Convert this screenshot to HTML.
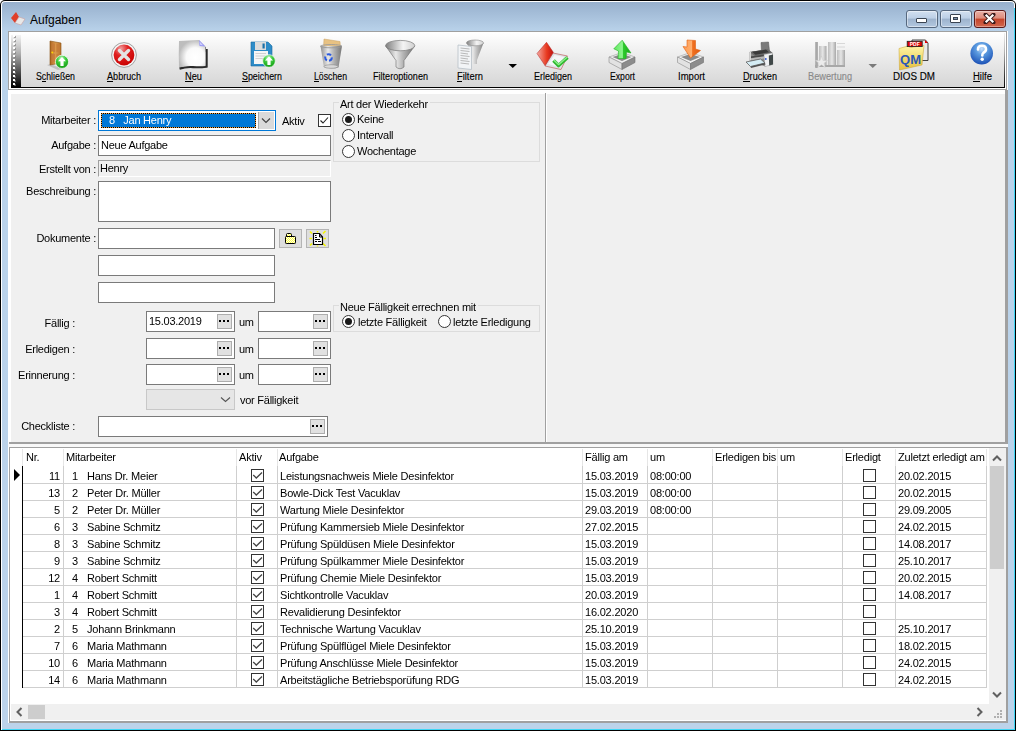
<!DOCTYPE html>
<html><head><meta charset="utf-8">
<style>
*{box-sizing:border-box;margin:0;padding:0}
html,body{width:1016px;height:731px;overflow:hidden;background:#fff}
body{position:relative;font-family:"Liberation Sans",sans-serif;font-size:11px;color:#000}
.a{position:absolute}
.lbl{position:absolute;white-space:pre;font-size:11px;letter-spacing:-0.25px;line-height:13px}
.box{position:absolute;background:#fff;border:1px solid #7a7a7a}
.dots{position:absolute;background:#e1e1e1;border:1px solid #adadad;width:15px;height:15px}
.dots:after{content:"";position:absolute;left:1px;top:5px;width:2px;height:2px;background:#000;box-shadow:4px 0 0 #000,8px 0 0 #000}
.tbl{position:absolute;white-space:pre;font-size:10px;letter-spacing:-0.2px;line-height:12px;top:71px;text-align:center;color:#1e1e1e}
.tbl u{text-decoration:none;border-bottom:1px solid #000}
.radio{position:absolute;width:13px;height:13px;border-radius:50%;border:1px solid #333;background:#fff}
.radio.on:after{content:"";position:absolute;left:2px;top:2px;width:7px;height:7px;border-radius:50%;background:#1a1a1a}
.gt{position:absolute;white-space:pre;font-size:11px;letter-spacing:-0.2px;line-height:13px}
.grp{position:absolute;border:1px solid #dcdcdc}
</style></head><body>
<!-- window frame -->
<div class="a" style="left:0;top:0;width:1016px;height:731px;background:#000;border-radius:5px 5px 0 0"></div>
<div class="a" style="left:1px;top:1px;width:1014px;height:729px;background:#fff;border-radius:4px 4px 0 0"></div>
<div class="a" style="left:2px;top:2px;width:1012px;height:727px;border-radius:3px 3px 0 0;background:linear-gradient(#97b0cd 0px,#b9d2ea 29px,#bcd3ea 100%)"></div>
<div class="a" style="left:1014px;top:8px;width:1px;height:722px;background:#3fd6f5"></div>
<div class="a" style="left:2px;top:729px;width:1013px;height:1px;background:#3fd6f5"></div>

<!-- title -->
<svg class="a" style="left:10px;top:11px" width="16" height="16" viewBox="0 0 16 16">
  <path d="M1 7 L6 1 L9 6 L5 12 Z" fill="#e0402a"/>
  <path d="M5 12 L9 6 L15 8 L11 14 Z" fill="#e8e8e8" stroke="#c9a0a0" stroke-width="0.6"/>
</svg>
<div class="a" style="left:30px;top:13px;font-size:12px;line-height:14px;color:#000;white-space:pre">Aufgaben</div>

<!-- caption buttons -->
<div class="a" style="left:906px;top:10px;width:32px;height:18px;border:1px solid #56687f;border-radius:3px;background:linear-gradient(#d2e0f0 0,#bccfe6 45%,#9db3cd 50%,#b3c8e0 100%);box-shadow:inset 0 0 0 1px rgba(255,255,255,.45)"></div>
<div class="a" style="left:916px;top:18px;width:11px;height:5px;background:#fff;border:1px solid #3a4452;border-radius:1px"></div>
<div class="a" style="left:940px;top:10px;width:32px;height:18px;border:1px solid #56687f;border-radius:3px;background:linear-gradient(#d2e0f0 0,#bccfe6 45%,#9db3cd 50%,#b3c8e0 100%);box-shadow:inset 0 0 0 1px rgba(255,255,255,.45)"></div>
<div class="a" style="left:950px;top:14px;width:11px;height:9px;background:#fff;border:1px solid #3a4452;border-radius:1px"><div class="a" style="left:2px;top:2px;width:5px;height:3px;background:#7d93ad;border:1px solid #3a4452"></div></div>
<div class="a" style="left:974px;top:10px;width:32px;height:18px;border:1px solid #5a1a1a;border-radius:3px;background:linear-gradient(#eab0a6 0,#dd8b7b 45%,#c4442a 50%,#d2684e 100%);box-shadow:inset 0 0 0 1px rgba(255,255,255,.35)"></div>
<svg class="a" style="left:983px;top:13px" width="13" height="11" viewBox="0 0 13 11">
  <path d="M2.5 1.5 L10.5 9.5 M10.5 1.5 L2.5 9.5" stroke="#3a1a1a" stroke-width="4" fill="none" stroke-linecap="round"/>
  <path d="M2.7 1.7 L10.3 9.3 M10.3 1.7 L2.7 9.3" stroke="#fff" stroke-width="2.2" fill="none"/>
</svg>

<!-- client -->
<div class="a" style="left:8px;top:31px;width:1000px;height:692px;background:#fff"></div>

<!-- toolbar -->
<div class="a" style="left:8px;top:31px;width:999px;height:59px;border:1px solid #a0a0a0;background:#fff"></div>
<div class="a" style="left:11px;top:33px;width:994px;height:55px;border-bottom:1px solid #000;background:linear-gradient(#ffffff 0,#f5f5f5 22%,#e6e6e6 58%,#d6d6d6 100%)"></div>
<div class="a" style="left:11px;top:35px;width:10px;height:52px;background:linear-gradient(#f4f4f4,#b0b0b0 35%,#505050 70%,#000 100%)"></div>
<div class="a" style="left:1004px;top:33px;width:1px;height:55px;background:linear-gradient(#f0f0f0,#b0b0b0 35%,#404040 75%,#000)"></div>
<div id="grip" class="a" style="left:13px;top:36px;width:2px;height:2px"></div>

<div id="toolbar" style="position:absolute;left:0;top:0;width:1016px;height:731px"><svg class="a" style="left:0;top:0" width="1016" height="90" viewBox="0 0 1016 90">
<defs>
<linearGradient id="door" x1="0" x2="1"><stop offset="0" stop-color="#a8621e"/><stop offset="0.45" stop-color="#dc9a4c"/><stop offset="1" stop-color="#b8742c"/></linearGradient>
<radialGradient id="grn" cx="0.45" cy="0.25" r="0.75"><stop offset="0" stop-color="#b8f5b8"/><stop offset="0.45" stop-color="#3ccc3c"/><stop offset="1" stop-color="#119a11"/></radialGradient>
<radialGradient id="red" cx="0.35" cy="0.2" r="0.85"><stop offset="0" stop-color="#f0a0a0"/><stop offset="0.4" stop-color="#e02020"/><stop offset="1" stop-color="#c80000"/></radialGradient>
<radialGradient id="page" cx="0.62" cy="0.62" r="0.62"><stop offset="0" stop-color="#ffffff"/><stop offset="0.55" stop-color="#fafafa"/><stop offset="1" stop-color="#bdbdbd"/></radialGradient>
<linearGradient id="silv" x1="0" x2="1"><stop offset="0" stop-color="#8c8c8c"/><stop offset="0.35" stop-color="#e8e8e8"/><stop offset="0.6" stop-color="#b4b4b4"/><stop offset="1" stop-color="#707070"/></linearGradient>
<linearGradient id="silv2" x1="0" x2="1"><stop offset="0" stop-color="#808080"/><stop offset="0.6" stop-color="#f4f4f4"/><stop offset="1" stop-color="#d0d0d0"/></linearGradient>
<linearGradient id="redb" x1="0" x2="1"><stop offset="0" stop-color="#f4a8a0"/><stop offset="0.6" stop-color="#e83a20"/><stop offset="1" stop-color="#c01010"/></linearGradient>
<linearGradient id="garr" x1="0" x2="1"><stop offset="0" stop-color="#5ee85e"/><stop offset="0.5" stop-color="#8ff58f"/><stop offset="0.55" stop-color="#2ecb2e"/><stop offset="1" stop-color="#16a816"/></linearGradient>
<linearGradient id="oarr" x1="0" x2="1"><stop offset="0" stop-color="#ff9a50"/><stop offset="0.5" stop-color="#ffb070"/><stop offset="0.55" stop-color="#f07020"/><stop offset="1" stop-color="#e05a10"/></linearGradient>
<radialGradient id="blue" cx="0.5" cy="0.3" r="0.75"><stop offset="0" stop-color="#c8e0fa"/><stop offset="0.35" stop-color="#5b9be0"/><stop offset="1" stop-color="#1448b0"/></radialGradient>
<linearGradient id="fold" x1="0" x2="0" y1="0" y2="1"><stop offset="0" stop-color="#fff6a8"/><stop offset="1" stop-color="#e6c040"/></linearGradient>
<linearGradient id="gbar" x1="0" x2="1"><stop offset="0" stop-color="#bdbdbd"/><stop offset="0.5" stop-color="#e6e6e6"/><stop offset="1" stop-color="#a8a8a8"/></linearGradient>
</defs>
<path d="M47 65 L58 70 L62 69 L51 64 Z" fill="#a8a8a8" opacity="0.6"/>
<path d="M50 41 L61 43 L61 63 L50 65 Z" fill="url(#door)" stroke="#8a5010" stroke-width="0.6"/>
<path d="M51.5 43 L55 43.5 L55 52 L51.5 52 Z M56.5 44 L59.5 44.5 L59.5 52 L56.5 52 Z M51.5 54 L55 54 L55 62 L51.5 62.5 Z M56.5 54 L59.5 54 L59.5 61.5 L56.5 62 Z" fill="#c57a38" opacity="0.8"/>
<circle cx="52.3" cy="52.5" r="1" fill="#ffd400"/>
<circle cx="62" cy="61.8" r="6.6" fill="url(#grn)" stroke="#ffffff" stroke-width="0.7"/>
<path d="M62 57 L66 61.2 L63.6 61.2 L63.6 66 L60.4 66 L60.4 61.2 L58 61.2 Z" fill="#fff"/>
<circle cx="124" cy="55" r="12.4" fill="#f4f4f4" stroke="#a0a0a0" stroke-width="1"/>
<circle cx="124" cy="55" r="10.4" fill="url(#red)"/>
<path d="M119.5 50.5 L128.5 59.5 M128.5 50.5 L119.5 59.5" stroke="#e4e4e4" stroke-width="3.4" stroke-linecap="round"/>
<filter id="blur1" x="-20%" y="-20%" width="140%" height="140%"><feGaussianBlur stdDeviation="0.7"/></filter>
<path d="M179.5 68.5 Q186 66.5 193 67 Q200 67.5 206.5 66.5 L206.5 49" stroke="#2a2a2a" stroke-width="2.4" fill="none" filter="url(#blur1)"/>
<path d="M199 46 L206 47 L206 52 L201 50 Z" fill="#333" filter="url(#blur1)"/>
<path d="M179 41 Q185 40.5 189 40.5 Q194 40 199 40 L205.5 46.5 L205.5 66 Q200 66.5 193 66 Q186 65.5 179 67.5 Q178.5 54 179 41 Z" fill="url(#page)"/>
<path d="M199 40 L205.5 46.5 L199.5 46 Z" fill="#9a9af4"/>
<path d="M199.5 41.5 L203 45.3 L200.3 45.1 Z" fill="#d0d0ff"/>
<path d="M251 42 L268 42 L272 46 L272 66 L251 66 Z" fill="#2e8cc8" stroke="#1a6aa0" stroke-width="0.6"/>
<rect x="255" y="42" width="11" height="8" fill="#dcdcdc"/><rect x="262.5" y="43.5" width="2.2" height="5" fill="#1a70a8"/>
<rect x="254" y="51" width="14" height="13" fill="#f6f6f6"/><path d="M255.5 53.5 L266 53.5 M255.5 56 L266 56 M255.5 58.5 L266 58.5" stroke="#c8c8c8" stroke-width="0.8"/>
<circle cx="269" cy="61" r="6.3" fill="url(#grn)" stroke="#fff" stroke-width="0.7"/>
<path d="M269 56.3 L273 60.5 L270.6 60.5 L270.6 65 L267.4 65 L267.4 60.5 L265 60.5 Z" fill="#fff"/>
<path d="M324 39 L340 41.5 L340.5 48 L323.5 48 Z" fill="#e8c283" stroke="#c8a060" stroke-width="0.5"/>
<path d="M320.5 46 L342 46 L338.5 67.5 Q331 70 324 67.5 Z" fill="url(#silv)" opacity="0.95"/>
<ellipse cx="331.2" cy="46.2" rx="10.8" ry="1.6" fill="none" stroke="#9a9a9a" stroke-width="0.9"/>
<ellipse cx="331" cy="66.5" rx="7" ry="1.8" fill="#d8d8d8" stroke="#8a8a8a" stroke-width="0.6"/>
<circle cx="328.5" cy="57.5" r="3.3" fill="none" stroke="#2a5ae0" stroke-width="2" stroke-dasharray="4.5 2.2"/>
<path d="M385.7 46 L396 60.5 L396 67 Q400 70.5 404 67 L404 60.5 L414.7 46 Z" fill="url(#silv)" stroke="#6a6a6a" stroke-width="0.6"/>
<ellipse cx="400.2" cy="45.6" rx="14.6" ry="5.2" fill="url(#silv2)" stroke="#7a7a7a" stroke-width="0.7"/>
<path d="M467 42.9 L473 60 L473 64 L477 64 L477 60 L483.5 42.9 Z" fill="url(#silv)" opacity="0.85"/>
<ellipse cx="475" cy="42.9" rx="8.6" ry="2.9" fill="url(#silv2)" stroke="#8a8a8a" stroke-width="0.6"/>
<path d="M458 45 L471.5 46.5 L471.5 69.5 L458 68 Z" fill="#f2f4f6" stroke="#b8c0c8" stroke-width="0.8"/>
<path d="M460.5 48 L469.5 49 M460.5 50.5 L469.5 51.5 M460.5 53 L468 54 M460.5 55.5 L469.5 56.5 M460.5 58 L468 59 M460.5 60.5 L469.5 61.5 M460.5 63 L469 64" stroke="#a8a8a8" stroke-width="0.8"/>
<path d="M545 66 L553 53 L567.5 56 L561 69.5 Z" fill="#dfe2e6" stroke="#c06060" stroke-width="0.7"/>
<path d="M548 64 L554.5 55 L564 57 L559 67 Z" fill="#f4f6f8"/>
<path d="M537 53.5 L546.5 42.3 L553.3 52.3 L545 65.5 Z" fill="url(#redb)" stroke="#b02020" stroke-width="0.5"/>
<path d="M553.5 60.5 L558.5 65.5 L567.5 57.5" stroke="#2eb82e" stroke-width="3.6" fill="none" stroke-linejoin="round"/>
<path d="M554 60.3 L558.5 64.6 L567 57.3" stroke="#8af08a" stroke-width="1.4" fill="none" stroke-linejoin="round"/>
<path d="M609 57 L622 52.5 L635 57 L622 63.5 Z" fill="#f0f0f0" stroke="#9a9a9a" stroke-width="0.6"/>
<path d="M612.5 57 L622 54 L631.5 57 L622 61 Z" fill="#8a8a8a"/>
<path d="M609 57 L622 63.5 L622 69.5 L609 62.5 Z" fill="#e2e2e2" stroke="#8a8a8a" stroke-width="0.6"/>
<path d="M635 57 L622 63.5 L622 69.5 L635 62.5 Z" fill="#8c8c8c" stroke="#707070" stroke-width="0.6"/>
<path d="M622.2 40.2 L631 53 L626.5 52 L626 58.5 L618 58.5 L618.5 51 L613.8 48.8 Z" fill="url(#garr)" stroke="#20b020" stroke-width="0.6"/>
<path d="M677.5 57 L690.5 52.5 L703.5 57 L690.5 63.5 Z" fill="#f0f0f0" stroke="#9a9a9a" stroke-width="0.6"/>
<path d="M681.0 57 L690.5 54 L700.0 57 L690.5 61 Z" fill="#8a8a8a"/>
<path d="M677.5 57 L690.5 63.5 L690.5 69.5 L677.5 62.5 Z" fill="#e2e2e2" stroke="#8a8a8a" stroke-width="0.6"/>
<path d="M703.5 57 L690.5 63.5 L690.5 69.5 L703.5 62.5 Z" fill="#8c8c8c" stroke="#707070" stroke-width="0.6"/>
<path d="M687 40 L695.5 40.5 L695.5 49 L700.5 50.5 L690.5 58 L683 46.5 L687 47 Z" fill="url(#oarr)" stroke="#e06010" stroke-width="0.6"/>
<path d="M761 42.5 L768.5 42 L769.5 51 L761.5 51.5 Z" fill="#7a7a7a" stroke="#555" stroke-width="0.5"/>
<path d="M749.5 52 L768 49 L772.5 53 L772.5 64.5 L765 66.5 L749.5 60.5 Z" fill="#8a8a8a"/>
<path d="M749.5 52 L768 49 L772.5 53 L755 56 Z" fill="#6a6a6a"/>
<path d="M752 51.8 L766 49.6 L769 52.3 L755.5 54.7 Z" fill="#3a3a3a"/>
<path d="M750 56.5 L764 54.5 L764 56.3 L750 58.3 Z" fill="#4a4a4a"/>
<path d="M750 58.5 L764 56.5 L764 58.5 L750 60.5 Z" fill="#b8b8b8"/>
<path d="M749.5 52 L751 52 L751 60.5 L749.5 60 Z" fill="#d8d8d8"/>
<path d="M764 54.5 L772.5 53 L773 64.5 L765 66.5 Z" fill="#f0f2f4" stroke="#9a9a9a" stroke-width="0.4"/>
<path d="M768.8 55.5 L773 54.5 L773 64.5 L769.2 65.5 Z" fill="#404848"/>
<path d="M746 62 L760.5 59 L765 63 L750.5 66.5 Z" fill="#d4ecf4" stroke="#606060" stroke-width="0.8"/>
<path d="M750.5 66.5 L765 63 L765.5 64.5 L751 68 Z" fill="#505050"/>
<circle cx="765.8" cy="59" r="0.9" fill="#3050d0"/>
<rect x="815.2" y="42" width="2.7" height="26" fill="#a8a8a8"/>
<rect x="819" y="46" width="7.5" height="20" fill="url(#gbar)"/>
<rect x="828" y="42" width="8" height="23.5" fill="url(#gbar)"/>
<rect x="837" y="50" width="8" height="15.5" fill="url(#gbar)"/>
<rect x="815" y="65" width="30" height="2" fill="#a8a8a8"/>
<path d="M837 43.5 L845 43.5 M837 47 L845 47" stroke="#d0d0d0" stroke-width="0.8"/>
<path d="M821.5 56 L823 60.5 L827.5 60.5 L824 63.2 L825.3 67.5 L821.5 64.8 L817.7 67.5 L819 63.2 L815.5 60.5 L820 60.5 Z" fill="#ececec" stroke="#c8c8c8" stroke-width="0.5"/>
<path d="M912 40 L925.5 40 L928 43 L928 60.5 L912 60.5 Z" fill="#e8e8e8" stroke="#303030" stroke-width="0.9"/>
<path d="M925 40 L928 43 L925 43 Z" fill="#e00000"/>
<path d="M917 50 L919 44 L921 50 M916 54 L921.5 49.5 M918 49 L923 53" stroke="#e04040" stroke-width="0.6" fill="none"/>
<path d="M899 48.5 L908 46 L910 47.5 L924 45.5 L922 65 L899.5 70 Z" fill="url(#fold)" stroke="#c8a030" stroke-width="0.5"/>
<rect x="907.2" y="41.3" width="15" height="5.3" fill="#e00000" stroke="#202020" stroke-width="0.8"/>
<text x="914.7" y="45.8" font-family="Liberation Sans" font-size="5" font-weight="bold" fill="#fff" text-anchor="middle">PDF</text>
<text x="900" y="63.6" font-family="Liberation Sans" font-size="12.5" font-weight="bold" fill="#2b58b8" textLength="21" lengthAdjust="spacingAndGlyphs">QM</text>
<circle cx="981.7" cy="53.3" r="11.3" fill="url(#blue)"/>
<path d="M978 49.5 Q978 45.8 982 45.8 Q986 45.8 986 49.3 Q986 51.5 983.2 53 Q982.3 53.6 982.3 55.5" stroke="#fff" stroke-width="2.6" fill="none" stroke-linecap="round"/>
<circle cx="982.2" cy="59.3" r="1.7" fill="#fff"/>
<path d="M508.5 64 L517 64 L512.75 68 Z" fill="#000"/>
<path d="M868.5 64 L877 64 L872.75 68 Z" fill="#7a7a7a"/>
<text x="36" y="79.8" font-family="Liberation Sans" font-size="10" fill="#000" stroke="#000" stroke-width="0.12" textLength="39" lengthAdjust="spacingAndGlyphs">Schließen</text>
<text x="107" y="79.8" font-family="Liberation Sans" font-size="10" fill="#000" stroke="#000" stroke-width="0.12" textLength="34" lengthAdjust="spacingAndGlyphs">Abbruch</text>
<text x="185" y="79.8" font-family="Liberation Sans" font-size="10" fill="#000" stroke="#000" stroke-width="0.12" textLength="17" lengthAdjust="spacingAndGlyphs">Neu</text>
<text x="242" y="79.8" font-family="Liberation Sans" font-size="10" fill="#000" stroke="#000" stroke-width="0.12" textLength="40" lengthAdjust="spacingAndGlyphs">Speichern</text>
<text x="314" y="79.8" font-family="Liberation Sans" font-size="10" fill="#000" stroke="#000" stroke-width="0.12" textLength="33" lengthAdjust="spacingAndGlyphs">Löschen</text>
<text x="373" y="79.8" font-family="Liberation Sans" font-size="10" fill="#000" stroke="#000" stroke-width="0.12" textLength="55" lengthAdjust="spacingAndGlyphs">Filteroptionen</text>
<text x="457" y="79.8" font-family="Liberation Sans" font-size="10" fill="#000" stroke="#000" stroke-width="0.12" textLength="26" lengthAdjust="spacingAndGlyphs">Filtern</text>
<text x="534" y="79.8" font-family="Liberation Sans" font-size="10" fill="#000" stroke="#000" stroke-width="0.12" textLength="38" lengthAdjust="spacingAndGlyphs">Erledigen</text>
<text x="610" y="79.8" font-family="Liberation Sans" font-size="10" fill="#000" stroke="#000" stroke-width="0.12" textLength="25" lengthAdjust="spacingAndGlyphs">Export</text>
<text x="678" y="79.8" font-family="Liberation Sans" font-size="10" fill="#000" stroke="#000" stroke-width="0.12" textLength="27" lengthAdjust="spacingAndGlyphs">Import</text>
<text x="743" y="79.8" font-family="Liberation Sans" font-size="10" fill="#000" stroke="#000" stroke-width="0.12" textLength="34" lengthAdjust="spacingAndGlyphs">Drucken</text>
<text x="808" y="79.8" font-family="Liberation Sans" font-size="10" fill="#8a8a8a" stroke="#8a8a8a" stroke-width="0.12" textLength="44" lengthAdjust="spacingAndGlyphs">Bewertung</text>
<text x="893" y="79.8" font-family="Liberation Sans" font-size="10" fill="#000" stroke="#000" stroke-width="0.12" textLength="42" lengthAdjust="spacingAndGlyphs">DIOS DM</text>
<text x="973" y="79.8" font-family="Liberation Sans" font-size="10" fill="#000" stroke="#000" stroke-width="0.12" textLength="19" lengthAdjust="spacingAndGlyphs">Hilfe</text>
<rect x="42" y="81" width="4" height="1" fill="#000"/>
<rect x="107" y="81" width="6" height="1" fill="#000"/>
<rect x="185" y="81" width="8" height="1" fill="#000"/>
<rect x="242" y="81" width="6" height="1" fill="#000"/>
<rect x="314" y="81" width="5" height="1" fill="#000"/>
<rect x="457" y="81" width="5" height="1" fill="#000"/>
<rect x="743" y="81" width="7" height="1" fill="#000"/>
<rect x="973" y="81" width="7" height="1" fill="#000"/>
</svg>
<div class="a" style="left:14px;top:84px;width:2px;height:2px;background:#808080;opacity:0.7"></div>
<div class="a" style="left:13px;top:83px;width:2px;height:2px;background:#fff"></div>
<div class="a" style="left:14px;top:80px;width:2px;height:2px;background:#808080;opacity:0.7"></div>
<div class="a" style="left:13px;top:79px;width:2px;height:2px;background:#fff"></div>
<div class="a" style="left:14px;top:76px;width:2px;height:2px;background:#808080;opacity:0.7"></div>
<div class="a" style="left:13px;top:75px;width:2px;height:2px;background:#fff"></div>
<div class="a" style="left:14px;top:72px;width:2px;height:2px;background:#808080;opacity:0.7"></div>
<div class="a" style="left:13px;top:71px;width:2px;height:2px;background:#fff"></div>
<div class="a" style="left:14px;top:68px;width:2px;height:2px;background:#808080;opacity:0.7"></div>
<div class="a" style="left:13px;top:67px;width:2px;height:2px;background:#fff"></div>
<div class="a" style="left:14px;top:64px;width:2px;height:2px;background:#808080;opacity:0.7"></div>
<div class="a" style="left:13px;top:63px;width:2px;height:2px;background:#fff"></div>
<div class="a" style="left:14px;top:60px;width:2px;height:2px;background:#808080;opacity:0.7"></div>
<div class="a" style="left:13px;top:59px;width:2px;height:2px;background:#fff"></div>
<div class="a" style="left:14px;top:56px;width:2px;height:2px;background:#808080;opacity:0.7"></div>
<div class="a" style="left:13px;top:55px;width:2px;height:2px;background:#fff"></div>
<div class="a" style="left:14px;top:52px;width:2px;height:2px;background:#808080;opacity:0.7"></div>
<div class="a" style="left:13px;top:51px;width:2px;height:2px;background:#fff"></div>
<div class="a" style="left:14px;top:48px;width:2px;height:2px;background:#808080;opacity:0.7"></div>
<div class="a" style="left:13px;top:47px;width:2px;height:2px;background:#fff"></div>
<div class="a" style="left:14px;top:44px;width:2px;height:2px;background:#808080;opacity:0.7"></div>
<div class="a" style="left:13px;top:43px;width:2px;height:2px;background:#fff"></div>
<div class="a" style="left:14px;top:40px;width:2px;height:2px;background:#808080;opacity:0.7"></div>
<div class="a" style="left:13px;top:39px;width:2px;height:2px;background:#fff"></div>
<div class="a" style="left:14px;top:36px;width:2px;height:2px;background:#808080;opacity:0.7"></div>
<div class="a" style="left:13px;top:35px;width:2px;height:2px;background:#fff"></div></div><!--/toolbar-->

<!-- upper panel -->
<div class="a" style="left:9px;top:90px;width:999px;height:354px;background:#a0a0a0"></div>
<div class="a" style="left:8px;top:90px;width:997px;height:352px;background:#fff"></div>
<div class="a" style="left:11px;top:94px;width:994px;height:348px;background:#f0f0f0"></div>
<div class="a" style="left:545px;top:93px;width:1px;height:349px;background:#a0a0a0"></div>
<div class="a" style="left:546px;top:93px;width:1px;height:349px;background:#fff"></div>

<div id="form" style="will-change:transform;position:absolute;left:0;top:0;width:1016px;height:731px"><div class="lbl" style="right:920px;top:114px;">Mitarbeiter :</div>
<div class="lbl" style="right:920px;top:139px;">Aufgabe :</div>
<div class="lbl" style="right:920px;top:163px;">Erstellt von :</div>
<div class="lbl" style="right:920px;top:185px;">Beschreibung :</div>
<div class="lbl" style="right:920px;top:232px;">Dokumente :</div>
<div class="lbl" style="right:941px;top:317px;">Fällig :</div>
<div class="lbl" style="right:941px;top:343px;">Erledigen :</div>
<div class="lbl" style="right:941px;top:369px;">Erinnerung :</div>
<div class="lbl" style="right:941px;top:420px;">Checkliste :</div>
<div class="a" style="left:98px;top:110px;width:178px;height:21px;border:1px solid #0078d7;background:#fff"></div>
<div class="a" style="left:101px;top:113px;width:155px;height:15px;border:1px dotted #000;background:linear-gradient(#0078d7,#0078d7) padding-box,linear-gradient(#f0a040,#f0a040) border-box"></div>
<div class="lbl" style="left:109px;top:114px;color:#fff">8   Jan Henry</div>
<div class="a" style="left:258px;top:112px;width:16px;height:17px;background:#dadada;border-left:1px solid #a8a8a8"></div>
<svg class="a" style="left:261px;top:117px" width="10" height="7"><path d="M1 1.5 L5 5.5 L9 1.5" stroke="#444" stroke-width="1.2" fill="none"/></svg>
<div class="lbl" style="left:282px;top:115px;">Aktiv</div>
<div class="a" style="left:318px;top:114px;width:13px;height:13px;border:1px solid #333;background:#fff"></div>
<svg class="a" style="left:318px;top:114px" width="13" height="13"><path d="M2.5 6.5 L5 9 L10 3.5" stroke="#222" stroke-width="1.1" fill="none"/></svg>
<div class="box" style="left:98px;top:135px;width:233px;height:21px"></div>
<div class="lbl" style="left:101px;top:139px;">Neue Aufgabe</div>
<div class="a" style="left:98px;top:160px;width:233px;height:17px;border-top:1px solid #a0a0a0;border-left:1px solid #a0a0a0;border-bottom:1px solid #fff;border-right:1px solid #fff;background:#f0f0f0"></div>
<div class="lbl" style="left:100px;top:162px;">Henry</div>
<div class="box" style="left:98px;top:181px;width:233px;height:41px"></div>
<div class="box" style="left:98px;top:228px;width:177px;height:21px"></div>
<div class="box" style="left:98px;top:255px;width:177px;height:21px"></div>
<div class="box" style="left:98px;top:282px;width:177px;height:21px"></div>
<div class="a" style="left:306px;top:229px;width:23px;height:19px;background:#dedede;border:1px solid #b4b4b4"></div>
<div class="a" style="left:279px;top:229px;width:23px;height:19px;background:#dedede;border:1px solid #b4b4b4"></div>
<svg class="a" style="left:279px;top:228px" width="52" height="22" viewBox="0 0 52 22"><defs><pattern id="chk" width="2" height="2" patternUnits="userSpaceOnUse"><rect width="2" height="2" fill="#ffff40"/><rect width="1" height="1" fill="#fffff0"/><rect x="1" y="1" width="1" height="1" fill="#fffff0"/></pattern></defs><path d="M7.5 8.5 L7.5 6.5 Q7.5 5.5 8.5 5.5 L11.5 5.5 Q12.5 5.5 12.5 6.5 L12.5 8.5" fill="url(#chk)" stroke="#000" stroke-width="1"/><rect x="6.5" y="8.5" width="10" height="7" rx="0.8" fill="url(#chk)" stroke="#000" stroke-width="1"/><path d="M31 3.5 L33 5.5 M46.5 3 L44 5.5 M31 17.5 L33 15.5 M46.5 18 L44 15.5 M38.5 3 L38.5 4.5 M38.5 17.5 L38.5 18.5 M30.5 10.5 L33 10.5 M44.5 10.5 L47 10.5" stroke="#f4f400" stroke-width="1.6"/><path d="M34.5 5.5 L40.5 5.5 L43.5 9 L43.5 16.5 L34.5 16.5 Z" fill="#fff" stroke="#000" stroke-width="1.2"/><path d="M40.5 5.5 L40.5 9 L43.5 9" fill="none" stroke="#000" stroke-width="1"/><path d="M36 7.5 L37.5 7.5 M36 9.5 L38 9.5 M36 11.5 L41 11.5 M36 13.5 L38 13.5 M39 13.5 L42 13.5" stroke="#000" stroke-width="1"/></svg>
<div class="box" style="left:146px;top:311px;width:89px;height:21px"></div>
<div class="dots" style="left:217px;top:314px"></div>
<div class="lbl" style="left:149px;top:315px;">15.03.2019</div>
<div class="lbl" style="left:239px;top:316px;">um</div>
<div class="box" style="left:258px;top:311px;width:73px;height:21px"></div>
<div class="dots" style="left:313px;top:314px"></div>
<div class="box" style="left:146px;top:338px;width:89px;height:21px"></div>
<div class="dots" style="left:217px;top:341px"></div>
<div class="lbl" style="left:239px;top:343px;">um</div>
<div class="box" style="left:258px;top:338px;width:73px;height:21px"></div>
<div class="dots" style="left:313px;top:341px"></div>
<div class="box" style="left:146px;top:364px;width:89px;height:21px"></div>
<div class="dots" style="left:217px;top:367px"></div>
<div class="lbl" style="left:239px;top:369px;">um</div>
<div class="box" style="left:258px;top:364px;width:73px;height:21px"></div>
<div class="dots" style="left:313px;top:367px"></div>
<div class="a" style="left:146px;top:389px;width:89px;height:21px;background:#e6e6e6;border:1px solid #c8c8c8"></div>
<svg class="a" style="left:220px;top:396px" width="11" height="7"><path d="M1 1.5 L5.5 5.5 L10 1.5" stroke="#555" stroke-width="1.1" fill="none"/></svg>
<div class="lbl" style="left:240px;top:394px;">vor Fälligkeit</div>
<div class="box" style="left:98px;top:416px;width:230px;height:21px"></div>
<div class="dots" style="left:310px;top:419px"></div>
<div class="grp" style="left:333px;top:102px;width:207px;height:60px"></div>
<div class="lbl" style="left:339px;top:98px;background:#f0f0f0;padding:0 2px 0 1px">Art der Wiederkehr</div>
<div class="radio on" style="left:342px;top:113px"></div>
<div class="lbl" style="left:357px;top:113px;">Keine</div>
<div class="radio" style="left:342px;top:129px"></div>
<div class="lbl" style="left:357px;top:129px;">Intervall</div>
<div class="radio" style="left:342px;top:145px"></div>
<div class="lbl" style="left:357px;top:145px;">Wochentage</div>
<div class="grp" style="left:333px;top:305px;width:207px;height:27px"></div>
<div class="lbl" style="left:339px;top:301px;background:#f0f0f0;padding:0 2px 0 1px">Neue Fälligkeit errechnen mit</div>
<div class="radio on" style="left:342px;top:315px"></div>
<div class="lbl" style="left:358px;top:316px;">letzte Fälligkeit</div>
<div class="radio" style="left:438px;top:315px"></div>
<div class="lbl" style="left:453px;top:316px;">letzte Erledigung</div></div><!--/form-->

<!-- splitter -->
<div class="a" style="left:8px;top:444px;width:1000px;height:3px;background:#f8f8f8"></div>

<!-- lower panel -->
<div class="a" style="left:9px;top:447px;width:999px;height:276px;background:#a0a0a0"></div>
<div class="a" style="left:10px;top:448px;width:996px;height:273px;background:#fff"></div>

<div id="grid" style="will-change:transform;position:absolute;left:0;top:0;width:1016px;height:731px"><div class="a" style="left:63px;top:449px;width:1px;height:17px;background:#e6e6e6"></div>
<div class="a" style="left:236px;top:449px;width:1px;height:17px;background:#e6e6e6"></div>
<div class="a" style="left:277px;top:449px;width:1px;height:17px;background:#e6e6e6"></div>
<div class="a" style="left:582px;top:449px;width:1px;height:17px;background:#e6e6e6"></div>
<div class="a" style="left:647px;top:449px;width:1px;height:17px;background:#e6e6e6"></div>
<div class="a" style="left:712px;top:449px;width:1px;height:17px;background:#e6e6e6"></div>
<div class="a" style="left:777px;top:449px;width:1px;height:17px;background:#e6e6e6"></div>
<div class="a" style="left:842px;top:449px;width:1px;height:17px;background:#e6e6e6"></div>
<div class="a" style="left:895px;top:449px;width:1px;height:17px;background:#e6e6e6"></div>
<div class="a" style="left:986px;top:449px;width:1px;height:17px;background:#e6e6e6"></div>
<div class="a" style="left:22px;top:449px;width:1px;height:17px;background:#e6e6e6"></div>
<div class="a" style="left:63px;top:466px;width:1px;height:222px;background:#cfcfcf"></div>
<div class="a" style="left:236px;top:466px;width:1px;height:222px;background:#cfcfcf"></div>
<div class="a" style="left:277px;top:466px;width:1px;height:222px;background:#cfcfcf"></div>
<div class="a" style="left:582px;top:466px;width:1px;height:222px;background:#cfcfcf"></div>
<div class="a" style="left:647px;top:466px;width:1px;height:222px;background:#cfcfcf"></div>
<div class="a" style="left:712px;top:466px;width:1px;height:222px;background:#cfcfcf"></div>
<div class="a" style="left:777px;top:466px;width:1px;height:222px;background:#cfcfcf"></div>
<div class="a" style="left:842px;top:466px;width:1px;height:222px;background:#cfcfcf"></div>
<div class="a" style="left:895px;top:466px;width:1px;height:222px;background:#cfcfcf"></div>
<div class="a" style="left:986px;top:466px;width:1px;height:222px;background:#cfcfcf"></div>
<div class="a" style="left:23px;top:483px;width:964px;height:1px;background:#cfcfcf"></div>
<div class="a" style="left:23px;top:500px;width:964px;height:1px;background:#cfcfcf"></div>
<div class="a" style="left:23px;top:517px;width:964px;height:1px;background:#cfcfcf"></div>
<div class="a" style="left:23px;top:534px;width:964px;height:1px;background:#cfcfcf"></div>
<div class="a" style="left:23px;top:551px;width:964px;height:1px;background:#cfcfcf"></div>
<div class="a" style="left:23px;top:568px;width:964px;height:1px;background:#cfcfcf"></div>
<div class="a" style="left:23px;top:585px;width:964px;height:1px;background:#cfcfcf"></div>
<div class="a" style="left:23px;top:602px;width:964px;height:1px;background:#cfcfcf"></div>
<div class="a" style="left:23px;top:619px;width:964px;height:1px;background:#cfcfcf"></div>
<div class="a" style="left:23px;top:636px;width:964px;height:1px;background:#cfcfcf"></div>
<div class="a" style="left:23px;top:653px;width:964px;height:1px;background:#cfcfcf"></div>
<div class="a" style="left:23px;top:670px;width:964px;height:1px;background:#cfcfcf"></div>
<div class="a" style="left:23px;top:687px;width:964px;height:1px;background:#cfcfcf"></div>
<div class="a" style="left:22px;top:466px;width:1px;height:222px;background:#000"></div>
<svg class="a" style="left:14px;top:469px" width="7" height="12"><path d="M0 0 L6 6 L0 12 Z" fill="#000"/></svg>
<div class="gt" style="left:26px;top:451px">Nr.</div>
<div class="gt" style="left:66px;top:451px">Mitarbeiter</div>
<div class="gt" style="left:239px;top:451px">Aktiv</div>
<div class="gt" style="left:279px;top:451px">Aufgabe</div>
<div class="gt" style="left:585px;top:451px">Fällig am</div>
<div class="gt" style="left:650px;top:451px">um</div>
<div class="gt" style="left:715px;top:451px">Erledigen bis</div>
<div class="gt" style="left:780px;top:451px">um</div>
<div class="gt" style="left:845px;top:451px">Erledigt</div>
<div class="gt" style="left:898px;top:451px">Zuletzt erledigt am</div>
<div class="gt" style="right:956px;top:470px">11</div>
<div class="gt" style="right:938px;top:470px">1</div>
<div class="gt" style="left:87px;top:470px">Hans Dr. Meier</div>
<div class="a" style="left:251px;top:469px;width:13px;height:13px;border:1px solid #333;background:#fff"></div><svg class="a" style="left:251px;top:469px" width="13" height="13"><path d="M2.2 6 L5.3 9 L11 3.5" stroke="#444" stroke-width="1.3" fill="none"/></svg>
<div class="gt" style="left:280px;top:470px">Leistungsnachweis Miele Desinfektor</div>
<div class="gt" style="left:585px;top:470px">15.03.2019</div>
<div class="gt" style="left:650px;top:470px">08:00:00</div>
<div class="a" style="left:863px;top:469px;width:13px;height:13px;border:1px solid #333;background:#fff"></div>
<div class="gt" style="left:898px;top:470px">20.02.2015</div>
<div class="gt" style="right:956px;top:487px">13</div>
<div class="gt" style="right:938px;top:487px">2</div>
<div class="gt" style="left:87px;top:487px">Peter Dr. Müller</div>
<div class="a" style="left:251px;top:486px;width:13px;height:13px;border:1px solid #333;background:#fff"></div><svg class="a" style="left:251px;top:486px" width="13" height="13"><path d="M2.2 6 L5.3 9 L11 3.5" stroke="#444" stroke-width="1.3" fill="none"/></svg>
<div class="gt" style="left:280px;top:487px">Bowle-Dick Test Vacuklav</div>
<div class="gt" style="left:585px;top:487px">15.03.2019</div>
<div class="gt" style="left:650px;top:487px">08:00:00</div>
<div class="a" style="left:863px;top:486px;width:13px;height:13px;border:1px solid #333;background:#fff"></div>
<div class="gt" style="left:898px;top:487px">20.02.2015</div>
<div class="gt" style="right:956px;top:504px">5</div>
<div class="gt" style="right:938px;top:504px">2</div>
<div class="gt" style="left:87px;top:504px">Peter Dr. Müller</div>
<div class="a" style="left:251px;top:503px;width:13px;height:13px;border:1px solid #333;background:#fff"></div><svg class="a" style="left:251px;top:503px" width="13" height="13"><path d="M2.2 6 L5.3 9 L11 3.5" stroke="#444" stroke-width="1.3" fill="none"/></svg>
<div class="gt" style="left:280px;top:504px">Wartung Miele Desinfektor</div>
<div class="gt" style="left:585px;top:504px">29.03.2019</div>
<div class="gt" style="left:650px;top:504px">08:00:00</div>
<div class="a" style="left:863px;top:503px;width:13px;height:13px;border:1px solid #333;background:#fff"></div>
<div class="gt" style="left:898px;top:504px">29.09.2005</div>
<div class="gt" style="right:956px;top:521px">6</div>
<div class="gt" style="right:938px;top:521px">3</div>
<div class="gt" style="left:87px;top:521px">Sabine Schmitz</div>
<div class="a" style="left:251px;top:520px;width:13px;height:13px;border:1px solid #333;background:#fff"></div><svg class="a" style="left:251px;top:520px" width="13" height="13"><path d="M2.2 6 L5.3 9 L11 3.5" stroke="#444" stroke-width="1.3" fill="none"/></svg>
<div class="gt" style="left:280px;top:521px">Prüfung Kammersieb Miele Desinfektor</div>
<div class="gt" style="left:585px;top:521px">27.02.2015</div>
<div class="a" style="left:863px;top:520px;width:13px;height:13px;border:1px solid #333;background:#fff"></div>
<div class="gt" style="left:898px;top:521px">24.02.2015</div>
<div class="gt" style="right:956px;top:538px">8</div>
<div class="gt" style="right:938px;top:538px">3</div>
<div class="gt" style="left:87px;top:538px">Sabine Schmitz</div>
<div class="a" style="left:251px;top:537px;width:13px;height:13px;border:1px solid #333;background:#fff"></div><svg class="a" style="left:251px;top:537px" width="13" height="13"><path d="M2.2 6 L5.3 9 L11 3.5" stroke="#444" stroke-width="1.3" fill="none"/></svg>
<div class="gt" style="left:280px;top:538px">Prüfung Spüldüsen Miele Desinfektor</div>
<div class="gt" style="left:585px;top:538px">15.03.2019</div>
<div class="a" style="left:863px;top:537px;width:13px;height:13px;border:1px solid #333;background:#fff"></div>
<div class="gt" style="left:898px;top:538px">14.08.2017</div>
<div class="gt" style="right:956px;top:555px">9</div>
<div class="gt" style="right:938px;top:555px">3</div>
<div class="gt" style="left:87px;top:555px">Sabine Schmitz</div>
<div class="a" style="left:251px;top:554px;width:13px;height:13px;border:1px solid #333;background:#fff"></div><svg class="a" style="left:251px;top:554px" width="13" height="13"><path d="M2.2 6 L5.3 9 L11 3.5" stroke="#444" stroke-width="1.3" fill="none"/></svg>
<div class="gt" style="left:280px;top:555px">Prüfung Spülkammer Miele Desinfektor</div>
<div class="gt" style="left:585px;top:555px">15.03.2019</div>
<div class="a" style="left:863px;top:554px;width:13px;height:13px;border:1px solid #333;background:#fff"></div>
<div class="gt" style="left:898px;top:555px">25.10.2017</div>
<div class="gt" style="right:956px;top:572px">12</div>
<div class="gt" style="right:938px;top:572px">4</div>
<div class="gt" style="left:87px;top:572px">Robert Schmitt</div>
<div class="a" style="left:251px;top:571px;width:13px;height:13px;border:1px solid #333;background:#fff"></div><svg class="a" style="left:251px;top:571px" width="13" height="13"><path d="M2.2 6 L5.3 9 L11 3.5" stroke="#444" stroke-width="1.3" fill="none"/></svg>
<div class="gt" style="left:280px;top:572px">Prüfung Chemie Miele Desinfektor</div>
<div class="gt" style="left:585px;top:572px">15.03.2019</div>
<div class="a" style="left:863px;top:571px;width:13px;height:13px;border:1px solid #333;background:#fff"></div>
<div class="gt" style="left:898px;top:572px">20.02.2015</div>
<div class="gt" style="right:956px;top:589px">1</div>
<div class="gt" style="right:938px;top:589px">4</div>
<div class="gt" style="left:87px;top:589px">Robert Schmitt</div>
<div class="a" style="left:251px;top:588px;width:13px;height:13px;border:1px solid #333;background:#fff"></div><svg class="a" style="left:251px;top:588px" width="13" height="13"><path d="M2.2 6 L5.3 9 L11 3.5" stroke="#444" stroke-width="1.3" fill="none"/></svg>
<div class="gt" style="left:280px;top:589px">Sichtkontrolle Vacuklav</div>
<div class="gt" style="left:585px;top:589px">20.03.2019</div>
<div class="a" style="left:863px;top:588px;width:13px;height:13px;border:1px solid #333;background:#fff"></div>
<div class="gt" style="left:898px;top:589px">14.08.2017</div>
<div class="gt" style="right:956px;top:606px">3</div>
<div class="gt" style="right:938px;top:606px">4</div>
<div class="gt" style="left:87px;top:606px">Robert Schmitt</div>
<div class="a" style="left:251px;top:605px;width:13px;height:13px;border:1px solid #333;background:#fff"></div><svg class="a" style="left:251px;top:605px" width="13" height="13"><path d="M2.2 6 L5.3 9 L11 3.5" stroke="#444" stroke-width="1.3" fill="none"/></svg>
<div class="gt" style="left:280px;top:606px">Revalidierung Desinfektor</div>
<div class="gt" style="left:585px;top:606px">16.02.2020</div>
<div class="a" style="left:863px;top:605px;width:13px;height:13px;border:1px solid #333;background:#fff"></div>
<div class="gt" style="right:956px;top:623px">2</div>
<div class="gt" style="right:938px;top:623px">5</div>
<div class="gt" style="left:87px;top:623px">Johann Brinkmann</div>
<div class="a" style="left:251px;top:622px;width:13px;height:13px;border:1px solid #333;background:#fff"></div><svg class="a" style="left:251px;top:622px" width="13" height="13"><path d="M2.2 6 L5.3 9 L11 3.5" stroke="#444" stroke-width="1.3" fill="none"/></svg>
<div class="gt" style="left:280px;top:623px">Technische Wartung Vacuklav</div>
<div class="gt" style="left:585px;top:623px">25.10.2019</div>
<div class="a" style="left:863px;top:622px;width:13px;height:13px;border:1px solid #333;background:#fff"></div>
<div class="gt" style="left:898px;top:623px">25.10.2017</div>
<div class="gt" style="right:956px;top:640px">7</div>
<div class="gt" style="right:938px;top:640px">6</div>
<div class="gt" style="left:87px;top:640px">Maria Mathmann</div>
<div class="a" style="left:251px;top:639px;width:13px;height:13px;border:1px solid #333;background:#fff"></div><svg class="a" style="left:251px;top:639px" width="13" height="13"><path d="M2.2 6 L5.3 9 L11 3.5" stroke="#444" stroke-width="1.3" fill="none"/></svg>
<div class="gt" style="left:280px;top:640px">Prüfung Spülflügel Miele Desinfektor</div>
<div class="gt" style="left:585px;top:640px">15.03.2019</div>
<div class="a" style="left:863px;top:639px;width:13px;height:13px;border:1px solid #333;background:#fff"></div>
<div class="gt" style="left:898px;top:640px">18.02.2015</div>
<div class="gt" style="right:956px;top:657px">10</div>
<div class="gt" style="right:938px;top:657px">6</div>
<div class="gt" style="left:87px;top:657px">Maria Mathmann</div>
<div class="a" style="left:251px;top:656px;width:13px;height:13px;border:1px solid #333;background:#fff"></div><svg class="a" style="left:251px;top:656px" width="13" height="13"><path d="M2.2 6 L5.3 9 L11 3.5" stroke="#444" stroke-width="1.3" fill="none"/></svg>
<div class="gt" style="left:280px;top:657px">Prüfung Anschlüsse Miele Desinfektor</div>
<div class="gt" style="left:585px;top:657px">15.03.2019</div>
<div class="a" style="left:863px;top:656px;width:13px;height:13px;border:1px solid #333;background:#fff"></div>
<div class="gt" style="left:898px;top:657px">24.02.2015</div>
<div class="gt" style="right:956px;top:674px">14</div>
<div class="gt" style="right:938px;top:674px">6</div>
<div class="gt" style="left:87px;top:674px">Maria Mathmann</div>
<div class="a" style="left:251px;top:673px;width:13px;height:13px;border:1px solid #333;background:#fff"></div><svg class="a" style="left:251px;top:673px" width="13" height="13"><path d="M2.2 6 L5.3 9 L11 3.5" stroke="#444" stroke-width="1.3" fill="none"/></svg>
<div class="gt" style="left:280px;top:674px">Arbeitstägliche Betriebsporüfung RDG</div>
<div class="gt" style="left:585px;top:674px">15.03.2019</div>
<div class="a" style="left:863px;top:673px;width:13px;height:13px;border:1px solid #333;background:#fff"></div>
<div class="gt" style="left:898px;top:674px">24.02.2015</div>
<div class="a" style="left:989px;top:448px;width:17px;height:256px;background:#f0f0f0"></div>
<div class="a" style="left:990px;top:466px;width:14px;height:103px;background:#cdcdcd"></div>
<svg class="a" style="left:992px;top:454px" width="10" height="8"><path d="M1 6.5 L5 2.5 L9 6.5" stroke="#606060" stroke-width="2" fill="none"/></svg>
<svg class="a" style="left:992px;top:691px" width="10" height="8"><path d="M1 1.5 L5 5.5 L9 1.5" stroke="#606060" stroke-width="2" fill="none"/></svg>
<div class="a" style="left:11px;top:704px;width:978px;height:16px;background:#f0f0f0"></div>
<div class="a" style="left:28px;top:705px;width:17px;height:14px;background:#cdcdcd"></div>
<svg class="a" style="left:15px;top:707px" width="8" height="10"><path d="M6.5 1 L2.5 5 L6.5 9" stroke="#606060" stroke-width="2" fill="none"/></svg>
<svg class="a" style="left:976px;top:707px" width="8" height="10"><path d="M1.5 1 L5.5 5 L1.5 9" stroke="#606060" stroke-width="2" fill="none"/></svg>
<div class="a" style="left:989px;top:704px;width:17px;height:16px;background:#f0f0f0"></div>
<div class="a" style="left:1000px;top:710px;width:2px;height:2px;background:#b0b0b0"></div>
<div class="a" style="left:997px;top:713px;width:2px;height:2px;background:#b0b0b0"></div>
<div class="a" style="left:1000px;top:713px;width:2px;height:2px;background:#b0b0b0"></div>
<div class="a" style="left:994px;top:716px;width:2px;height:2px;background:#b0b0b0"></div>
<div class="a" style="left:997px;top:716px;width:2px;height:2px;background:#b0b0b0"></div>
<div class="a" style="left:1000px;top:716px;width:2px;height:2px;background:#b0b0b0"></div></div><!--/grid-->

</body></html>
